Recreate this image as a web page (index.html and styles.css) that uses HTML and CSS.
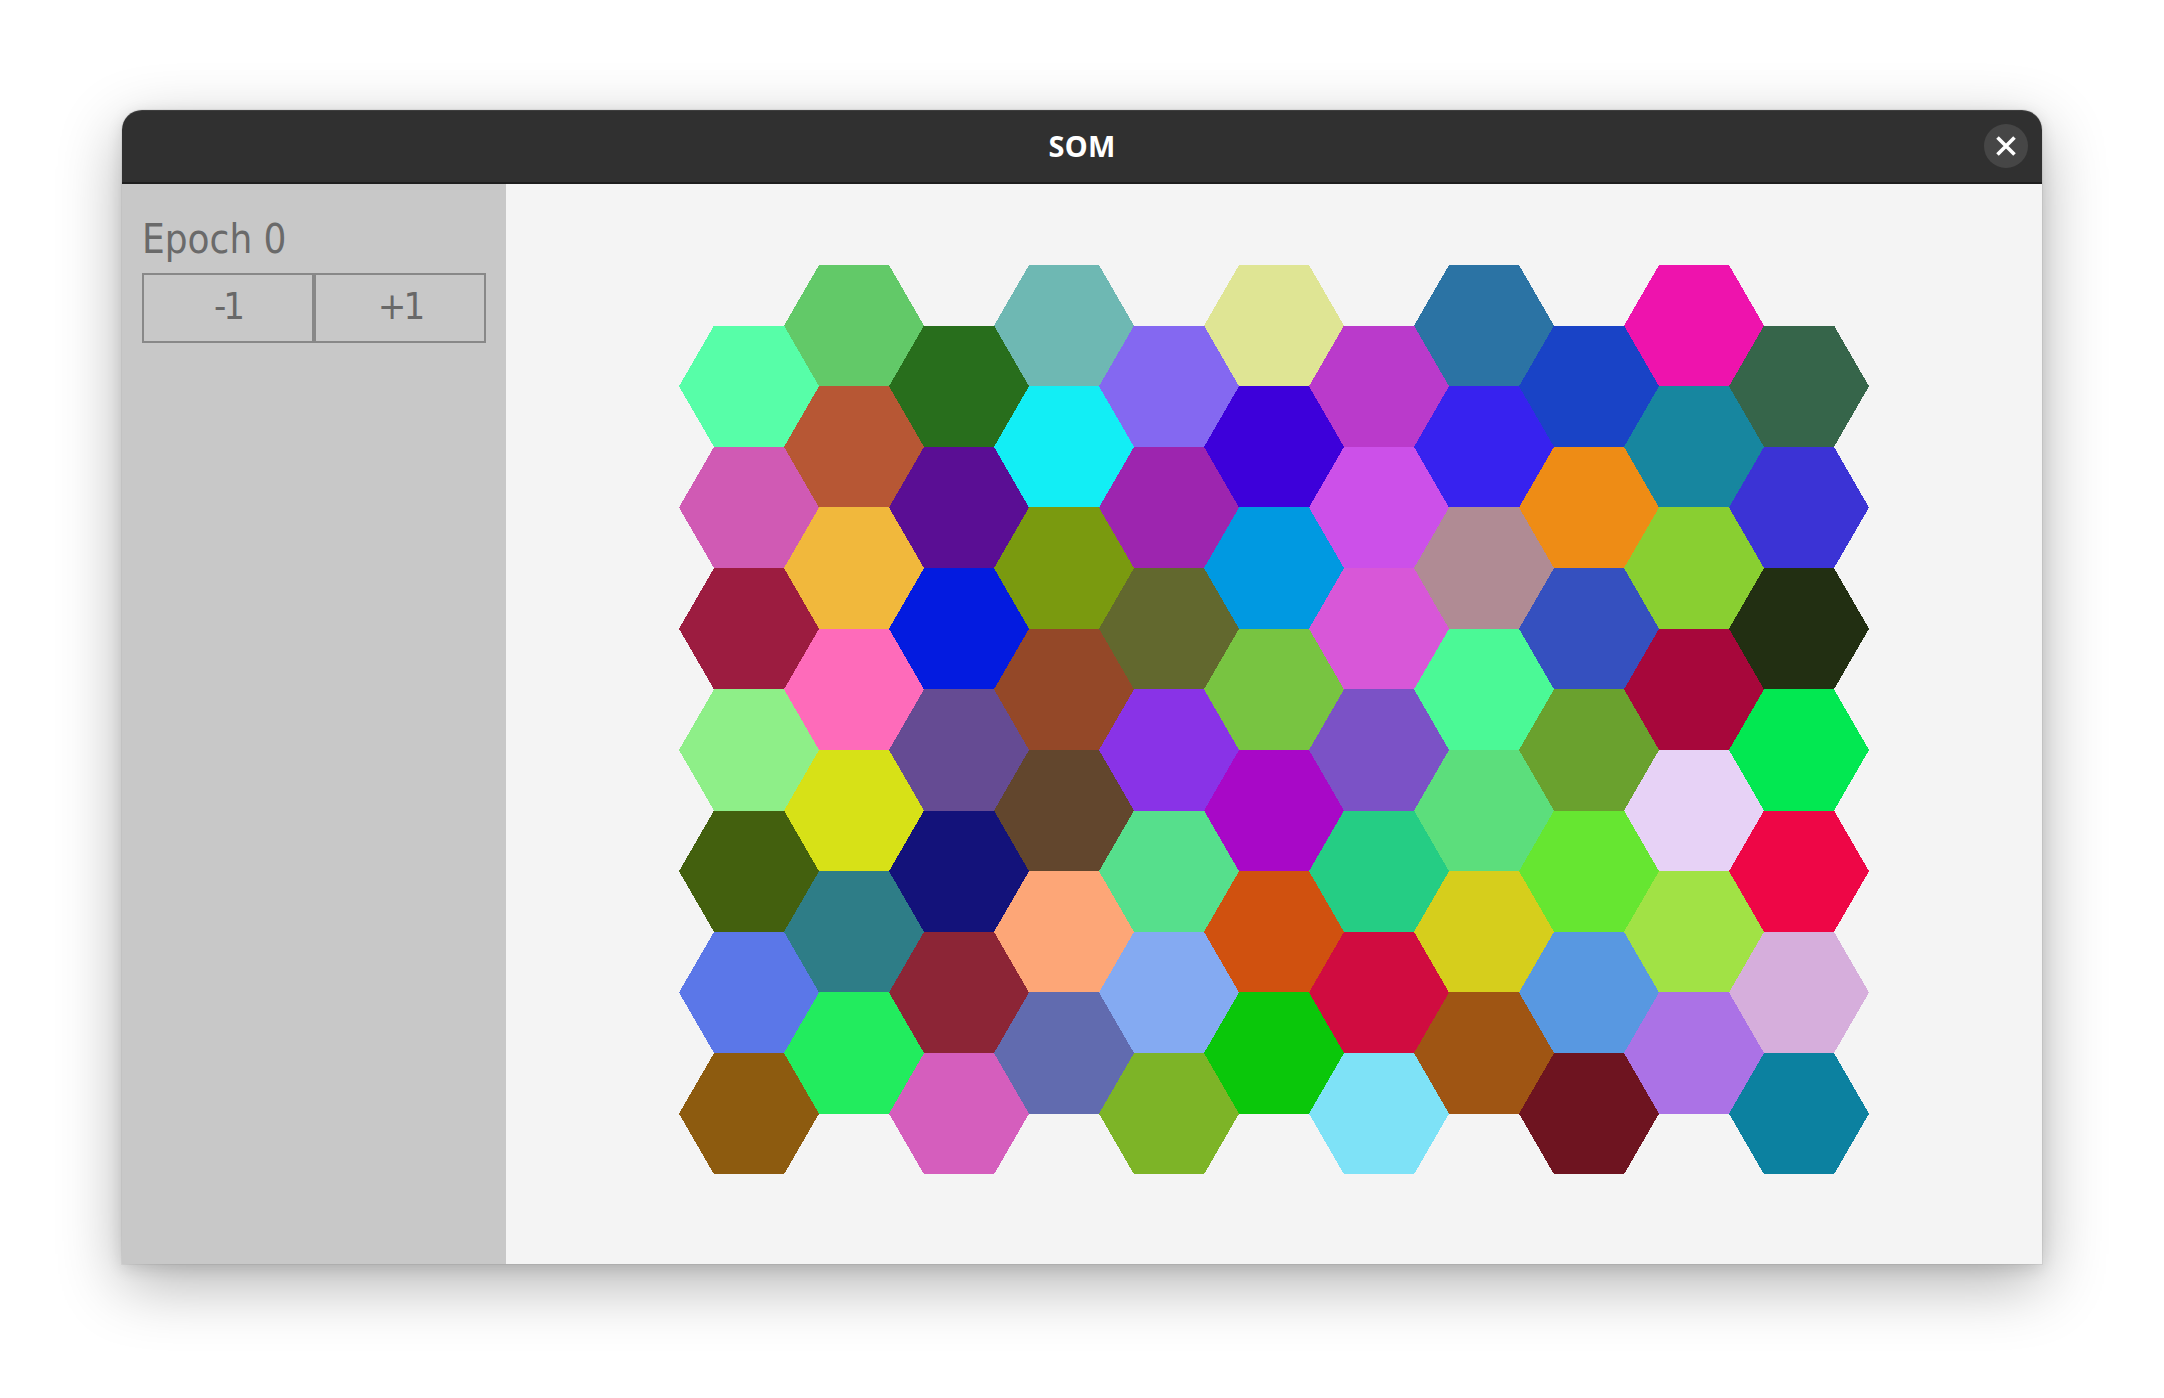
FILE: index.html
```html
<!DOCTYPE html>
<html>
<head>
<meta charset="utf-8">
<title>SOM</title>
<link rel="stylesheet" href="styles.css">
</head>
<body>
<div class="desktop">
  <div class="window">
    <div class="titlebar">
      <span class="title">SOM</span>
      <button class="close" aria-label="Close">
        <svg width="44" height="44" viewBox="0 0 44 44"><path d="M13.5 13.5 L30.5 30.5 M30.5 13.5 L13.5 30.5" stroke="#fff" stroke-width="3.6" fill="none"/></svg>
      </button>
    </div>
    <div class="content">
      <aside class="sidebar">
        <div class="epoch">Epoch 0</div>
        <div class="steps">
          <button class="step">-1</button>
          <button class="step">+1</button>
        </div>
      </aside>
      <main class="canvas">
        <svg id="hexmap" class="hexmap" width="1190" height="910" viewBox="0 0 1190 910" shape-rendering="crispEdges"></svg>
      </main>
    </div>
  </div>
</div>
<script src="script.js"></script>
</body>
</html>
```

FILE: styles.css
```css
html, body {
  margin: 0;
  padding: 0;
  background: #ffffff;
}

.desktop {
  padding: 110px 122px 134px 122px;
  min-height: 1398px;
  box-sizing: border-box;
}

.window {
  width: 1920px;
  border-radius: 20px 20px 0 0;
  box-shadow: 0 20px 64px rgba(0, 0, 0, 0.30), 0 4px 16px rgba(0, 0, 0, 0.12), 0 0 0 1px rgba(0, 0, 0, 0.05);
  background: #f4f4f4;
}

.titlebar {
  height: 72px;
  background: #303030;
  border-bottom: 2px solid #1e1e1e;
  border-radius: 20px 20px 0 0;
  box-shadow: inset 0 1px 0 rgba(255, 255, 255, 0.07);
  display: flex;
  align-items: center;
  justify-content: center;
  position: relative;
}

.title {
  font-family: "Noto Sans", "Open Sans", sans-serif;
  font-weight: 700;
  font-size: 29px;
  color: #ffffff;
  letter-spacing: 0.2px;
  padding-bottom: 2px;
}

.close {
  position: absolute;
  right: 14px;
  top: 14px;
  width: 44px;
  height: 44px;
  padding: 0;
  border: none;
  border-radius: 50%;
  background: #464646;
  display: flex;
  align-items: center;
  justify-content: center;
}

.content {
  display: flex;
  height: 1080px;
}

.sidebar {
  width: 384px;
  flex: none;
  background: #c8c8c8;
  box-sizing: border-box;
  padding: 34px 20px 0 20px;
}

.epoch {
  font-family: "DejaVu Sans Condensed", "DejaVu Sans", sans-serif;
  font-stretch: condensed;
  font-size: 40px;
  line-height: 42px;
  color: #6a6a6a;
}

.steps {
  display: flex;
  margin-top: 13px;
  width: 344px;
}

.step {
  width: 172px;
  height: 70px;
  box-sizing: border-box;
  border: 2px solid #888888;
  background: transparent;
  margin: 0;
  padding: 0 0 4px 0;
  font-family: "DejaVu Sans Condensed", "DejaVu Sans", sans-serif;
  font-stretch: condensed;
  font-size: 38px;
  color: #686868;
  letter-spacing: -3px;
}

.canvas {
  flex: 1;
  background: #f4f4f4;
  display: flex;
  justify-content: center;
  align-items: flex-start;
  padding-top: 81px;
}

.hexmap {
  display: block;
}
```

FILE: script.js
```js
(function () {
  var cols = [
    ["#57fea8", "#d05ab4", "#9c1c40", "#8eef88", "#43600e", "#5b77e8", "#8d5b0f"],
    ["#62c968", "#b75734", "#f1b83c", "#fe6bba", "#d7e117", "#2e7d87", "#22ec5e"],
    ["#286e1c", "#5a0e94", "#031be0", "#654b93", "#13127a", "#8c2536", "#d55ebd"],
    ["#6eb8b3", "#12eef5", "#7a9a0f", "#944828", "#62462d", "#fda677", "#616baf"],
    ["#8468f1", "#9d25af", "#62682e", "#8933e7", "#56df8c", "#84aaf2", "#7db427"],
    ["#dfe594", "#3d00da", "#0099e1", "#78c441", "#a808c7", "#d0510f", "#0ac70a"],
    ["#ba3acb", "#cc50e9", "#d857d8", "#7b52c6", "#25cd84", "#d00c40", "#7ee2f7"],
    ["#2b73a4", "#3722ef", "#b08b94", "#4bf996", "#5cde7c", "#d6ce1c", "#9f5513"],
    ["#1943c6", "#ee8c15", "#3550bf", "#6aa12e", "#66e631", "#5898e1", "#6e1420"],
    ["#ee13ad", "#17869f", "#89cf31", "#a7073b", "#e7d2f6", "#a1e245", "#ab72e6"],
    ["#36654a", "#3b33d5", "#222f12", "#02e851", "#ee0646", "#d6aedc", "#0c81a0"]
  ];
  var svg = document.getElementById("hexmap");
  var ns = "http://www.w3.org/2000/svg";
  var r = 70;
  var h = Math.sqrt(3) * r;
  for (var c = 0; c < cols.length; c++) {
    var cx = r + 1.5 * r * c;
    for (var i = 0; i < cols[c].length; i++) {
      var cy = (c % 2 === 0 ? h : h / 2) + h * i;
      var pts = [
        [cx - r, cy], [cx - r / 2, cy - h / 2], [cx + r / 2, cy - h / 2],
        [cx + r, cy], [cx + r / 2, cy + h / 2], [cx - r / 2, cy + h / 2]
      ].map(function (p) { return p[0].toFixed(2) + "," + p[1].toFixed(2); }).join(" ");
      var poly = document.createElementNS(ns, "polygon");
      poly.setAttribute("points", pts);
      poly.setAttribute("fill", cols[c][i]);
      svg.appendChild(poly);
    }
  }
})();
```
